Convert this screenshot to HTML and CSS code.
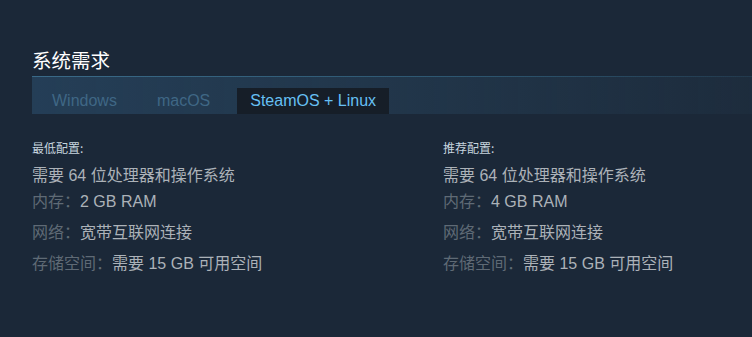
FILE: index.html
```html
<!DOCTYPE html>
<html lang="zh-CN">
<head>
    <meta charset="UTF-8">
    <meta name="viewport" content="width=device-width, initial-scale=1.0">
    <title>系统需求</title>
    <link rel="stylesheet" href="styles.css">
</head>
<body>
    <div class="sysreq">
        <h2>系统需求</h2>
        <div class="tabs">
            <div class="tab">Windows</div>
            <div class="tab">macOS</div>
            <div class="tab active">SteamOS + Linux</div>
        </div>
        <div class="cols">
            <div class="col">
                <div class="col-title">最低配置:</div>
                <ul>
                    <li class="first">需要 64 位处理器和操作系统</li>
                    <li><span class="label">内存：</span>2 GB RAM</li>
                    <li><span class="label">网络：</span>宽带互联网连接</li>
                    <li><span class="label">存储空间：</span>需要 15 GB 可用空间</li>
                </ul>
            </div>
            <div class="col">
                <div class="col-title">推荐配置:</div>
                <ul>
                    <li class="first">需要 64 位处理器和操作系统</li>
                    <li><span class="label">内存：</span>4 GB RAM</li>
                    <li><span class="label">网络：</span>宽带互联网连接</li>
                    <li><span class="label">存储空间：</span>需要 15 GB 可用空间</li>
                </ul>
            </div>
        </div>
    </div>
</body>
</html>
```

FILE: styles.css
```css
body {
    margin: 0;
    background: #1b2838;
    font-family: 'Liberation Sans', Arial, 'Noto Sans CJK SC', sans-serif;
    color: #acb2b8;
    height: 337px;
    overflow: hidden;
}

.sysreq {
    padding: 48px 0 0 32px;
}

h2 {
    margin: 0;
    font-size: 19.5px;
    font-weight: normal;
    color: #fff;
    line-height: 26px;
    padding-bottom: 2px;
}

.tabs {
    display: flex;
    align-items: flex-end;
    height: 37px;
    border-top: 1px solid;
    border-image: linear-gradient(to right, #3a6a88 0%, #2d5670 60%, rgba(45, 86, 112, 0.3) 100%) 1;
    background: linear-gradient(to right, rgba(38, 66, 92, 0.85) 0%, rgba(36, 60, 82, 0.6) 60%, rgba(32, 50, 68, 0.4) 100%);
}

.tab {
    font-size: 16px;
    color: #3f6785;
    height: 26px;
    line-height: 26px;
    padding: 0 20px;
}

.tab:nth-child(2) {
    padding-right: 27px;
}

.tab.active {
    background: #161e28;
    color: #66c0f4;
    padding: 0 13px;
}

.cols {
    display: grid;
    grid-template-columns: 411px 1fr;
    padding-top: 26px;
}

.col-title {
    font-size: 12px;
    color: #c6d4df;
    line-height: 16px;
    font-family: 'Noto Sans CJK SC', sans-serif;
}

ul {
    list-style: none;
    margin: 0;
    padding: 0;
}

li {
    font-size: 16px;
    line-height: 20px;
    margin-top: 11px;
    font-family: 'Liberation Sans', 'Noto Sans CJK SC', sans-serif;
}

li.first {
    margin-top: 10px;
}

li:nth-child(2) {
    margin-top: 6px;
}

.label {
    color: #5f6a75;
}
```
